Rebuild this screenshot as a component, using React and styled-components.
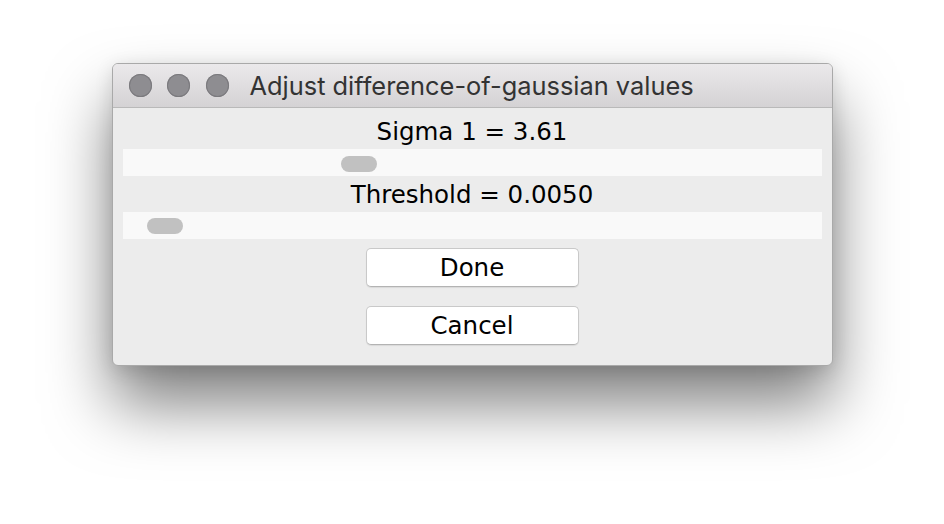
import React from 'react';
import styled, { createGlobalStyle } from 'styled-components';

const GlobalStyle = createGlobalStyle`
  html, body {
    margin: 0;
    padding: 0;
    background: #ffffff;
  }
  body {
    font-family: "DejaVu Sans", Verdana, sans-serif;
  }
`;

const Page = styled.div`
  width: 944px;
  height: 524px;
  padding-top: 63px;
  box-sizing: border-box;
  display: flex;
  justify-content: center;
  align-items: flex-start;
`;

const Window = styled.div`
  width: 721px;
  border-radius: 6px;
  overflow: hidden;
  background: #ececec;
  border: 1px solid #a9a9a9;
  box-sizing: border-box;
  box-shadow: 0 38px 64px 0 rgba(0, 0, 0, 0.5), 0 4px 18px rgba(0, 0, 0, 0.12);
`;

const TitleBar = styled.div`
  height: 43px;
  display: flex;
  align-items: center;
  padding-left: 16px;
  background: linear-gradient(#ebe9eb, #d4d2d4);
  border-bottom: 1px solid #b9b9b9;
`;

const Lights = styled.div`
  display: flex;
  gap: 15.5px;
  margin-right: 21px;
`;

const Light = styled.span`
  width: 23px;
  height: 23px;
  border-radius: 50%;
  background: #8e8d91;
  box-shadow: inset 0 0 0 1px #7b7a7e;
`;

const Title = styled.div`
  font-family: Inter, "Noto Sans", sans-serif;
  font-size: 25.4px;
  color: #333;
`;

const Body = styled.div`
  padding: 5px 10px 20px;
  display: flex;
  flex-direction: column;
  align-items: stretch;
`;

const Label = styled.div`
  height: 36px;
  line-height: 37px;
  text-align: center;
  font-size: 24.5px;
  color: #000;
`;

const Track = styled.div`
  position: relative;
  height: 27px;
  background: #f9f9f9;
`;

const Thumb = styled.div`
  position: absolute;
  top: ${p => p.$top}px;
  width: 36px;
  height: 16px;
  border-radius: 8px;
  background: #c1c1c1;
`;

const Buttons = styled.div`
  display: flex;
  flex-direction: column;
  align-items: center;
  gap: 19px;
  margin-top: 9px;
`;

const Button = styled.button`
  width: 213px;
  height: 39px;
  border-radius: 5px;
  border: 1px solid #c9c9c9;
  border-bottom-color: #b3b3b3;
  background: #ffffff;
  font-family: "DejaVu Sans", Verdana, sans-serif;
  font-size: 24.5px;
  color: #000;
  padding: 0;
  box-shadow: 0 1px 1px rgba(0, 0, 0, 0.08);
`;

const sliders = [
  { label: 'Sigma 1 = 3.61', offset: 218, top: 7 },
  { label: 'Threshold = 0.0050', offset: 24, top: 6 },
];

export default function App() {
  return (
    <>
      <GlobalStyle />
      <Page>
        <Window>
          <TitleBar>
            <Lights>
              <Light />
              <Light />
              <Light />
            </Lights>
            <Title>Adjust difference-of-gaussian values</Title>
          </TitleBar>
          <Body>
            {sliders.map(s => (
              <React.Fragment key={s.label}>
                <Label>{s.label}</Label>
                <Track>
                  <Thumb $top={s.top} style={{ left: s.offset }} />
                </Track>
              </React.Fragment>
            ))}
            <Buttons>
              <Button>Done</Button>
              <Button>Cancel</Button>
            </Buttons>
          </Body>
        </Window>
      </Page>
    </>
  );
}
